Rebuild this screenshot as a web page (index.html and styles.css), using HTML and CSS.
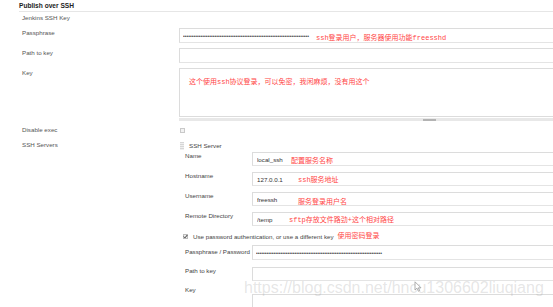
FILE: index.html
```html
<!DOCTYPE html>
<html>
<head>
    <meta charset="utf-8">
    <link rel="stylesheet" href="styles.css">
</head>
<body>
    <div class="page">
        <div class="section-title">Publish over SSH</div>

        <div class="form">
            <div class="row row-title">
                <span class="label">Jenkins SSH Key</span>
            </div>

            <div class="row r-pass">
                <span class="label">Passphrase</span>
                <div class="field">
                    <input class="text pwd" type="password" value="aaaaaaaaaaaaaaaaaaaaaaaaaaaaaaaaaaaaaaaaaaaaaaaaaaaaaaaaaaaaaaaaaaaaaaaa">
                    <span class="note note-pass">ssh登录用户，服务器使用功能freesshd</span>
                </div>
            </div>

            <div class="row r-path">
                <span class="label">Path to key</span>
                <div class="field">
                    <input class="text" type="text">
                </div>
            </div>

            <div class="row r-key">
                <span class="label">Key</span>
                <div class="field">
                    <textarea class="area"></textarea>
                    <span class="note note-key">这个使用ssh协议登录，可以免密，我闲麻烦，没有用这个</span>
                    <div class="grip"></div>
                </div>
            </div>

            <div class="row r-exec">
                <span class="label">Disable exec</span>
                <div class="field">
                    <span class="checkbox"></span>
                </div>
            </div>

            <div class="row r-servers">
                <span class="label">SSH Servers</span>
                <div class="field">
                    <div class="server-head">
                        <span class="handle"></span>
                        <span>SSH Server</span>
                    </div>

                    <div class="sub">
                        <div class="srow s-first">
                            <span class="label">Name</span>
                            <div class="field">
                                <input class="text small" type="text" value="local_ssh">
                                <span class="note note-name">配置服务名称</span>
                            </div>
                        </div>
                        <div class="srow">
                            <span class="label">Hostname</span>
                            <div class="field">
                                <input class="text small" type="text" value="127.0.0.1">
                                <span class="note note-host">ssh服务地址</span>
                            </div>
                        </div>
                        <div class="srow">
                            <span class="label">Username</span>
                            <div class="field">
                                <input class="text small" type="text" value="freessh">
                                <span class="note note-user">服务登录用户名</span>
                            </div>
                        </div>
                        <div class="srow">
                            <span class="label">Remote Directory</span>
                            <div class="field">
                                <input class="text small" type="text" value="/temp">
                                <span class="note note-dir">sftp存放文件路劲+这个相对路径</span>
                            </div>
                        </div>

                        <div class="check-row">
                            <span class="checkbox checked">
                                <svg width="5" height="5" viewBox="0 0 5 5"><path d="M0.8 2.6 L2 3.8 L4.3 1" fill="none" stroke="#333" stroke-width="1"/></svg>
                            </span>
                            <span>Use password authentication, or use a different key</span>
                            <span class="note-inline">使用密码登录</span>
                        </div>

                        <div class="srow s-pwd">
                            <span class="label">Passphrase / Password</span>
                            <div class="field">
                                <input class="text pwd" type="password" value="aaaaaaaaaaaaaaaaaaaaaaaaaaaaaaaaaaaaaaaaaaaaaaaaaaaaaaaaaaaaaaaaaaaaaaaa">
                            </div>
                        </div>
                        <div class="srow s-path">
                            <span class="label">Path to key</span>
                            <div class="field">
                                <input class="text small" type="text">
                            </div>
                        </div>
                        <div class="srow s-key">
                            <span class="label">Key</span>
                            <div class="field">
                                <textarea class="area"></textarea>
                            </div>
                        </div>
                    </div>
                </div>
            </div>
        </div>

        <div class="watermark">https://blog.csdn.net/hncu1306602liuqiang</div>
        <svg class="cursor" width="9" height="11" viewBox="0 0 9 11">
            <path d="M1 0.8 L1 9 L3 7.2 L4.4 10.2 L5.6 9.6 L4.3 6.8 L7 6.8 Z" fill="#fff" stroke="#999" stroke-width="0.8"/>
        </svg>
    </div>
</body>
</html>
```

FILE: styles.css
```css
body {
    margin: 0;
    font-family: "Liberation Sans", Arial, sans-serif;
    font-size: 6.2px;
    color: #555;
    background: #fff;
    overflow: hidden;
}
.page {
    position: relative;
    height: 307px;
    overflow: hidden;
}
.section-title {
    margin-left: 19px;
    height: 11px;
    line-height: 11px;
    border-bottom: 1px solid #e6e6e6;
    font-weight: bold;
    font-size: 6.6px;
    color: #222;
}
.form {
    padding-left: 22px;
}
.row {
    display: flex;
    align-items: flex-start;
}
.label {
    width: 157px;
    flex: none;
    line-height: 8px;
}
.field {
    flex: 1;
    position: relative;
    margin-right: -40px;
}
.row-title {
    margin-top: 2px;
}
.r-pass {
    margin-top: 6px;
}
.r-pass .label {
    padding-top: 1px;
}
.r-path {
    margin-top: 5px;
}
.r-path .label {
    padding-top: 1px;
}
.r-key {
    margin-top: 5px;
}
.r-key .label {
    padding-top: 1px;
}
.text {
    display: block;
    box-sizing: border-box;
    width: 100%;
    height: 15px;
    margin: 0;
    padding: 0 3px;
    border: 1px solid #dcdcdc;
    border-bottom-color: #e4e4e4;
    font-family: "Liberation Sans", Arial, sans-serif;
    font-size: 6.2px;
    color: #333;
    background: #fff;
    outline: none;
}
.text.small {
    height: 14px;
    padding: 0 4px;
}
.pwd {
    font-size: 5px;
    color: #444;
}
.area {
    display: block;
    box-sizing: border-box;
    width: 100%;
    height: 49px;
    margin: 0;
    border: 1px solid #dcdcdc;
    resize: none;
    background: #fff;
}
.grip {
    position: relative;
    height: 3px;
    margin-top: 1px;
    background: #e8e8e8;
}
.grip::after {
    content: "";
    position: absolute;
    left: 244px;
    top: 1px;
    width: 13px;
    height: 2px;
    background: #b3b3b3;
}
.r-exec {
    margin-top: 5px;
}
.checkbox {
    display: block;
    box-sizing: border-box;
    width: 5px;
    height: 5px;
    margin: 2px 0 0 1px;
    border: 1px solid #c9c9c9;
    background: #f2f2f2;
}
.r-servers {
    margin-top: 7px;
}
.server-head {
    display: flex;
    align-items: center;
    gap: 5px;
    height: 8px;
    margin-top: 1px;
    line-height: 8px;
    color: #444;
}
.handle {
    width: 4px;
    height: 8px;
    margin-left: 1px;
    background: repeating-linear-gradient(#d6d6d6 0 1px, #efefef 1px 2px);
}
.sub {
    padding-left: 6px;
}
.sub .label {
    width: 67px;
    color: #444;
}
.srow {
    display: flex;
    align-items: flex-start;
    margin-top: 6px;
}
.s-first {
    margin-top: 2px;
}
.srow .label {
    padding-top: 0;
}
.check-row {
    display: flex;
    align-items: center;
    height: 8px;
    margin-top: 7px;
    margin-left: -2px;
    line-height: 8px;
    color: #444;
}
.checkbox.checked {
    margin: 0 5px 1px 0;
    border-color: #bbb;
    background: #eee;
}
.checkbox.checked svg {
    display: block;
    margin: -1px;
}
.note-inline {
    margin: 0 0 3px 4px;
    font-family: "Liberation Mono", "Noto Sans CJK SC", monospace;
    font-size: 7px;
    color: #ff4545;
}
.s-pwd {
    margin-top: 4px;
}
.s-pwd .label {
    padding-top: 3px;
}
.s-path {
    margin-top: 7px;
}
.s-key {
    margin-top: 5px;
}
.s-key .field {
    padding-top: 8px;
}
.note {
    position: absolute;
    white-space: nowrap;
    line-height: 8px;
    font-family: "Liberation Mono", "Noto Sans CJK SC", monospace;
    font-size: 7px;
    color: #ff4545;
}
.note-pass {
    left: 137px;
    top: 6px;
}
.note-key {
    left: 10px;
    top: 10px;
}
.note-name {
    left: 39px;
    top: 5px;
}
.note-host {
    left: 46px;
    top: 4px;
}
.note-user {
    left: 46px;
    top: 6px;
}
.note-dir {
    left: 37px;
    top: 4px;
}
.watermark {
    position: absolute;
    left: 244px;
    top: 279px;
    font-size: 16px;
    line-height: 18px;
    color: rgba(170, 170, 170, 0.3);
    white-space: nowrap;
}
.cursor {
    position: absolute;
    left: 414px;
    top: 281px;
}
```
